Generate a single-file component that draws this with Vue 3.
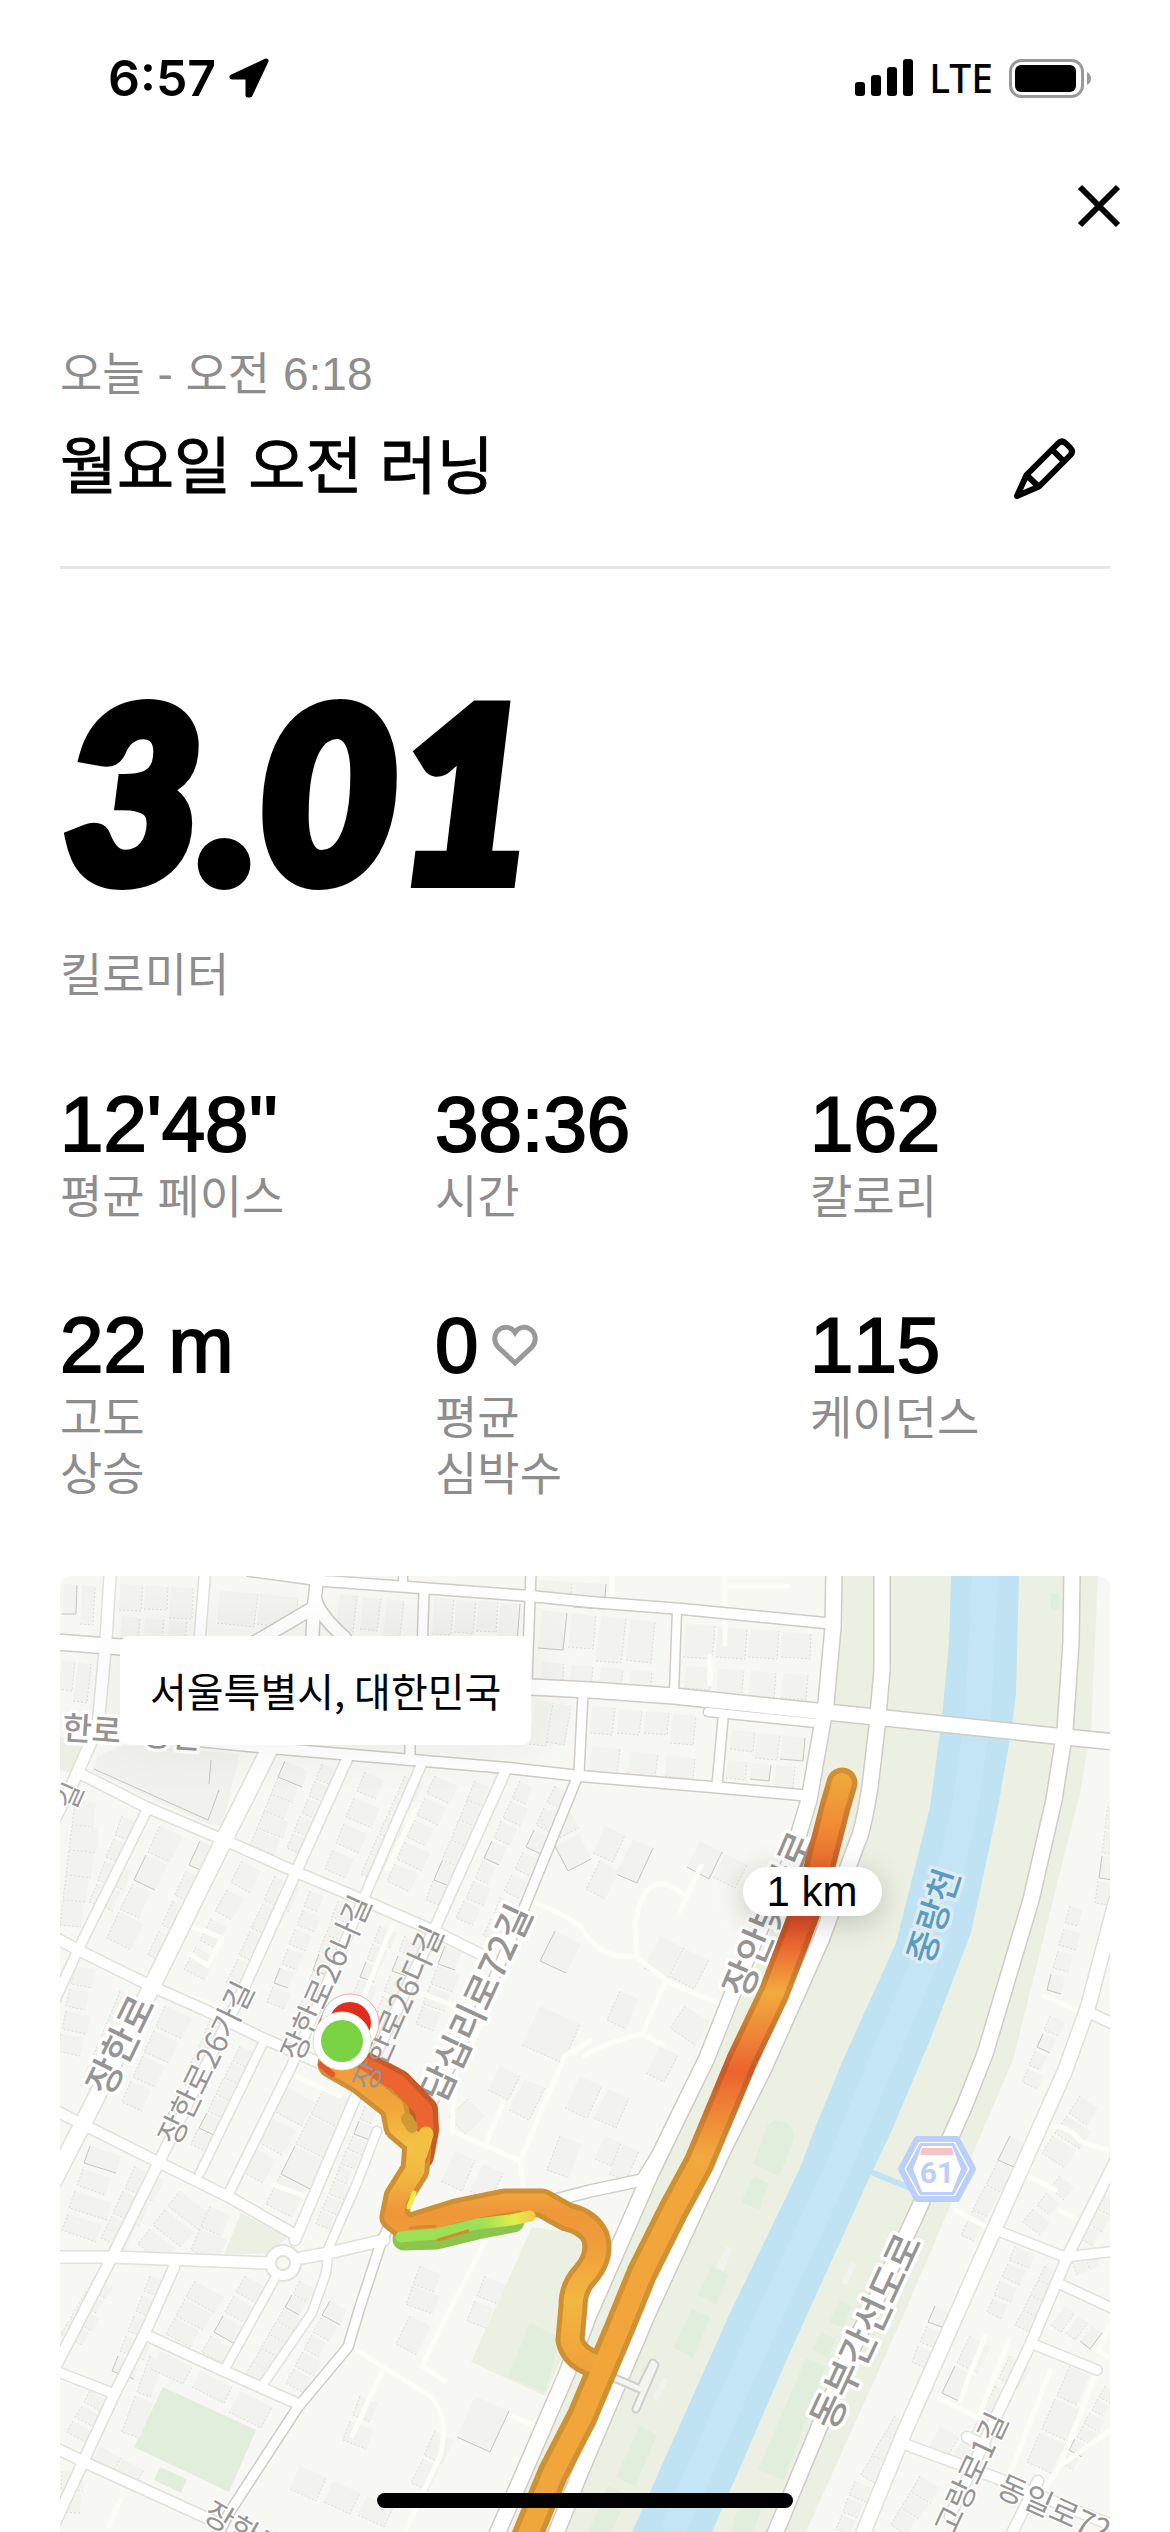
<script setup>
// -- Dependencies --
import {ref} from "vue";

// -- References --
const title = ref('월요일 오전 러닝');
const stats = ref([
  {value: "12'48''", label: ['평균 페이스']},
  {value: '38:36', label: ['시간']},
  {value: '162', label: ['칼로리']},
  {value: '22 m', label: ['고도', '상승']},
  {value: '0', label: ['평균', '심박수'], heart: true},
  {value: '115', label: ['케이던스']},
]);

// -- Map data --
// Small streets, light casing
const streets = [
  {w: 11, d: 'M50 0L46 64L38 150L11 211L-4 240'},
  {w: 10, d: 'M145 -4L140 60L137 164'},
  {w: 10, d: 'M19 197L86 231L164 264L236 296L303 324L372 354L426 381'},
  {w: 10, d: 'M-4 362L18 374L93 411L145 434L200 461L262 488'},
  {w: 9, d: 'M88 232L18 374L-4 422'},
  {w: 16, d: 'M210 172L164 264L90 414L35 524L-6 604'},
  {w: 10, d: 'M288 181L236 296L183 414L100 584L52 681L-4 790'},
  {w: 9, d: 'M362 187L303 324L231 491L169 617'},
  {w: 10, d: 'M445 196L374 354L293 527L235 664'},
  {w: 8, d: 'M204 465L140 597'},
  {w: 8, d: 'M317 555L297 607L269 671L266 697L252 737L204 807'},
  {w: 10, d: 'M-4 535L100 587L169 621L234 658'},
  {w: 11, d: 'M-4 681L52 681L210 687M241 682L269 677L324 664'},
  {w: 10, d: 'M114 691L85 757L55 817L23 886L-4 945'},
  {w: 9, d: 'M-4 795L52 817'},
  {w: 10, d: 'M86 759L162 794L236 827'},
  {w: 8, d: 'M214 704L166 791'},
  {w: 10, d: 'M-4 872L24 886L160 948'},
  {w: 14, d: 'M1056 325L1028 431L1005 495L934 654L844 857L800 965'},
  {w: 10, d: 'M1032 438L1056 449'},
  {w: 10, d: 'M1056 583L1009 677L971 767L919 877L890 940'},
  {w: 10, d: 'M978 905L948 965'},
  {w: 9, d: 'M941 656L1005 681L1056 675'},
  {w: 9, d: 'M1000 708L1056 734'},
  {w: 9, d: 'M973 768L1037 794'},
  {w: 10, d: 'M847 869L934 901L1056 951'},
  {w: 10, d: 'M907 861L925 870'},
];

// Named roads, stronger casing
const roads = [
  {w: 15, d: 'M-4 66L61 71L471 111L530 114L614 120L708 130L825 142L1005 161L1056 166'},
  {w: 10, d: 'M190 -5L265 5L470 20L530 26L622 33L765 47'},
  {w: 12, d: 'M257 3L254 30L252 70M253 32L195 66M255 22Q258 38 285 62'},
  {w: 9, d: 'M364 14L361 110'},
  {w: 9, d: 'M471 -4L467 106'},
  {w: 8, d: 'M343 -4L343 8'},
  {w: 10, d: 'M128 164L210 172L352 184L448 192L520 200L652 211L751 220'},
  {w: 9, d: 'M350 110L350 184'},
  {w: 9, d: 'M523 117L519 197L462 337L426 421L372 527L345 620L322 664L300 731L288 771L238 831L169 937L155 965'},
  {w: 8, d: 'M617 34L614 118'},
  {w: 8, d: 'M648 136L765 148'},
  {w: 9, d: 'M663 143L657 209'},
  {w: 11, d: 'M480 628L530 615L582 604L600 575'},
  {w: 15, d: 'M774 -4L773 51L766 127L749 224L731 284L686 384L646 484L620 537L591 597L528 741L507 797L434 965'},
  {w: 15, d: 'M822 -4L822 94L817 151L810 211Q803 255 797 267L761 364L704 492L663 574L588 737L520 897L493 965'},
  {w: 15, d: 'M1012 -4L1011 67L1005 154L994 224L971 324L925 478L904 531L855 641L787 784L712 965'},
];

const paths = [
  'M552 0V24M665 10H728M665 0V68M650 80V108',
  'M641 290L620 335M625 320Q585 285 575 350L577 380Q540 385 520 350M577 382L610 407L660 428M605 407L582 458L605 470M582 458Q540 468 524 480',
  'M355 235L327 293M332 350L300 430M355 415L395 430M470 325Q500 335 520 350',
  'M130 420L158 432M132 350L162 362L148 390L130 378',
  'M445 400L395 500L392 555L460 585L505 480L530 465M443 527L425 570M460 585L465 620',
  'M425 665L362 790L385 805M290 770L370 820Q390 840 380 880L345 956M325 790L292 860',
  'M453 840L475 850M60 925L48 950M214 609L245 620M235 500L280 520',
  'M897 635L925 650M990 550Q1010 550 1020 565L1050 575M968 600L995 614M1000 635L1020 645M985 420L1018 435',
  'M925 760L900 825M948 765L920 838M880 823L925 845M990 795L945 910M1035 800L1000 890L980 920M1050 750L1038 775L1056 785M1056 850L1000 890',
];

const parks = [
  'M103 811L196 854L169 916L74 871z',
  'M100 891L127 903L121 917L94 904z',
  'M470 747L500 761L485 816L448 801z',
  'M707 550Q715 540 728 548Q738 555 733 567L719 600L693 588z',
  'M694 600L709 608L699 634L681 626z',
  'M652 690L669 698L656 729L638 719z',
  'M632 733L650 741L633 782L613 771z',
  'M580 850L597 859L575 910L556 901z',
  'M548 910L568 918L548 965H525z',
  'M780 724L792 730L783 752L769 746z',
  'M762 756L776 763L768 782L752 774z',
  'M746 782L766 790L724 904L698 894z',
  'M682 918L705 924L690 965H668z',
  'M991 17h8v17h-8z',
];

// Rows of houses: start, end, count, depth
const rows = [
  [4, 8, 40, 10, 2, 40], [60, 8, 136, 12, 3, 32], [62, 40, 132, 46, 3, 28], [160, 14, 240, 22, 2, 34],
  [2, 84, 34, 88, 2, 40], [280, 18, 350, 26, 3, 44], [374, 22, 462, 28, 4, 40], [374, 62, 458, 70, 3, 34],
  [480, 4, 548, 8, 2, 26], [482, 34, 600, 46, 4, 46], [482, 86, 600, 96, 4, 30], [626, 48, 755, 58, 4, 34],
  [626, 90, 755, 100, 4, 30], [476, 124, 512, 130, 2, 54], [532, 130, 640, 140, 4, 30], [532, 170, 645, 184, 3, 26],
  [672, 154, 748, 162, 3, 26], [668, 184, 740, 192, 3, 22],
  [225, 185, 190, 270, 5, 28], [262, 188, 226, 275, 5, 20], [305, 196, 262, 300, 4, 28], [345, 200, 300, 300, 5, 24],
  [375, 200, 325, 310, 5, 28], [415, 205, 365, 325, 6, 22], [460, 205, 395, 345, 7, 20], [495, 210, 420, 365, 7, 22],
  [100, 250, 45, 365, 4, 28], [140, 265, 85, 385, 4, 30], [15, 225, 0, 350, 5, 28], [62, 240, 28, 330, 4, 28],
  [182, 285, 120, 400, 4, 24], [215, 300, 165, 410, 4, 28], [250, 315, 205, 430, 6, 20], [278, 325, 240, 430, 6, 20],
  [320, 350, 285, 440, 5, 20], [345, 360, 315, 440, 4, 20], [385, 370, 355, 450, 4, 24],
  [15, 390, -4, 480, 4, 26], [60, 415, 20, 510, 4, 26], [105, 430, 60, 530, 4, 30], [150, 445, 105, 545, 6, 20],
  [180, 470, 130, 570, 6, 20], [225, 510, 175, 600, 3, 38], [265, 510, 205, 630, 4, 40], [305, 530, 255, 650, 8, 18],
  [30, 570, 0, 660, 4, 40], [75, 590, 40, 665, 3, 36], [120, 615, 75, 672, 3, 40], [150, 630, 130, 675, 2, 30],
  [35, 700, 0, 760, 4, 26], [90, 700, 50, 800, 5, 26], [135, 705, 105, 760, 3, 34], [185, 700, 140, 780, 4, 34],
  [240, 705, 185, 800, 7, 22], [270, 725, 225, 810, 5, 22], [30, 815, 5, 860, 3, 28], [90, 780, 60, 860, 2, 20],
  [100, 775, 220, 835, 3, 24], [40, 870, 85, 895, 2, 28], [2, 895, 0, 940, 2, 22],
  [1010, 330, 985, 420, 4, 18], [1048, 230, 1035, 330, 4, 22], [990, 440, 960, 510, 4, 18], [950, 560, 900, 660, 4, 20],
  [1020, 520, 980, 580, 3, 30], [1000, 600, 960, 650, 3, 22], [1045, 620, 1020, 665, 3, 18], [955, 670, 925, 740, 4, 22],
  [985, 690, 955, 750, 4, 22], [1040, 690, 1015, 700, 2, 20], [1005, 730, 1045, 760, 3, 26], [910, 760, 880, 820, 2, 24],
  [875, 730, 850, 790, 3, 20], [835, 840, 800, 900, 3, 20], [795, 905, 775, 956, 3, 20], [950, 780, 905, 870, 3, 24],
  [1010, 790, 965, 890, 3, 30], [1045, 810, 1000, 890, 6, 18], [860, 900, 830, 950, 3, 26], [880, 850, 925, 875, 2, 24],
  [545, 250, 600, 275, 2, 40], [640, 265, 690, 290, 2, 36], [540, 285, 522, 320, 1, 24], [600, 360, 650, 385, 2, 36],
  [560, 415, 545, 450, 1, 28], [625, 430, 605, 460, 1, 36], [600, 470, 620, 480, 1, 34], [520, 500, 575, 525, 2, 36],
  [545, 560, 580, 575, 2, 34], [480, 240, 510, 300, 2, 36], [495, 355, 475, 395, 1, 32], [480, 430, 525, 450, 1, 44],
  [440, 490, 490, 515, 2, 36], [425, 540, 405, 560, 1, 30], [500, 560, 485, 600, 1, 26], [395, 575, 450, 600, 2, 34],
  [360, 690, 345, 730, 2, 30], [425, 700, 405, 750, 2, 28], [350, 740, 335, 770, 1, 26], [415, 820, 455, 838, 1, 46],
  [300, 820, 280, 870, 2, 26], [375, 855, 350, 910, 2, 26], [240, 890, 340, 935, 3, 28],
];

const labels = [
  {text: '한로', x: 32, y: 151, angle: 4, size: 32, weight: 500},
  {text: '장안', x: 112, y: 157, angle: 4, size: 32, weight: 500},
  {text: '길', x: 8, y: 219, angle: -66, size: 28},
  {text: '장한로', x: 58, y: 468, angle: -64, size: 38, weight: 500},
  {text: '장한로26가길', x: 144, y: 486, angle: -64, size: 31},
  {text: '장한로26나길', x: 264, y: 401, angle: -66, size: 31},
  {text: '답십리로72길', x: 414, y: 426, angle: -65, size: 37, weight: 500},
  {text: '장안벚꽃로', x: 706, y: 337, angle: -67, size: 38, weight: 500},
  {text: '중랑천', x: 871, y: 339, angle: -72, size: 35, weight: 500, river: true},
  {text: '동부간선도로', x: 803, y: 754, angle: -65, size: 38, weight: 500},
  {text: '고랑로1길', x: 909, y: 897, angle: -65, size: 31},
  {text: '동일로72길', x: 1008, y: 936, angle: 24, size: 31},
  {text: '장한로', x: 185, y: 953, angle: 30, size: 31},
];

// GPS track
const mainTrack = 'M782 207L775 231L764 274Q756 306 743 341L714 417L682 484L675 501L639 587L613 635L582 697L560 751L546 784L522 841L493 897L465 965';
const sideTrack = 'M272 488L300 504L334 531L338 551L357 567L355 594L338 621L334 641L348 652L396 637L445 627L482 627L507 641Q527 645 535 660Q542 680 524 700Q513 712 513 730L510 764Q514 784 543 790';
const redTrack = 'M306 490L338 507L364 534L365 554L360 580';
const greenTrack = 'M341 661L376 658L417 648L451 644L470 640';

// -- Functions --
// Cuts a row into houses of uneven length, returned as svg paths
function getHouses([x1, y1, x2, y2, count, depth], rowIndex){
  const length = Math.hypot(x2 - x1, y2 - y1);
  const ux = (x2 - x1) / length;
  const uy = (y2 - y1) / length;
  const step = length / count;
  const side = uy > Math.abs(ux) ? -1 : 1;
  const houses = [];

  for (let i = 0; i < count; i++) {
    const long = step * (0.74 + ((i * 5 + rowIndex * 3) % 5) * 0.05);
    const deep = depth * (0.74 + ((i * 3 + rowIndex) % 4) * 0.08);
    const ax = x1 + ux * step * i;
    const ay = y1 + uy * step * i;
    const bx = ax + ux * long;
    const by = ay + uy * long;
    const nx = -uy * deep * side;
    const ny = ux * deep * side;
    const points = [[ax, ay], [bx, by], [bx + nx, by + ny], [ax + nx, ay + ny]].map(p => p.map(Math.round).join(' '));
    houses.push({
      d: `M${points.join('L')}z`,
      shade: `M${points[side > 0 ? 3 : 0]}L${points[side > 0 ? 2 : 1]}L${points[side > 0 ? 1 : 2]}`,
      solid: (i + rowIndex) % 9 === 0,
    });
  }

  return houses;
}

const houses = rows.flatMap(getHouses);
</script>

<template>
  <main>
    <header class="status">
      <div class="clock">
        <span>6:57</span>
        <svg width="40" height="40" viewBox="0 0 40 40" aria-hidden="true">
          <path d="M37 3L3 19H19V37H21z" stroke="#000" stroke-width="5" stroke-linejoin="round"/>
        </svg>
      </div>
      <div class="signals">
        <svg width="58" height="38" viewBox="0 0 58 38" aria-hidden="true">
          <rect x="0" y="23" width="10" height="14" rx="3"/>
          <rect x="16" y="16" width="10" height="21" rx="3"/>
          <rect x="32" y="8" width="10" height="29" rx="3"/>
          <rect x="48" y="0" width="10" height="37" rx="3"/>
        </svg>
        <span>LTE</span>
        <svg width="83" height="39" viewBox="0 0 83 39" aria-hidden="true">
          <rect x="1.5" y="1.5" width="72" height="36" rx="11" fill="none" stroke="#999" stroke-width="3"/>
          <rect x="6" y="6" width="61" height="27" rx="6"/>
          <path d="M78 13q4 2 4 6.500t-4 6.500z" fill="#999"/>
        </svg>
      </div>
    </header>

    <nav>
      <button type="button" aria-label="닫기">
        <svg width="44" height="44" viewBox="0 0 44 44">
          <path d="M3 3L41 41M41 3L3 41" stroke="#000" stroke-width="6"/>
        </svg>
      </button>
    </nav>

    <section class="heading">
      <p class="grey">오늘 - 오전 6:18</p>
      <div class="titleRow">
        <h1>{{ title }}</h1>
        <button type="button" aria-label="제목 편집">
          <svg width="62" height="62" viewBox="0 0 62 62" fill="none" stroke="#000" stroke-width="6" stroke-linejoin="round">
            <path d="M3 59L12.500 38L44 6.500Q48 2.500 52 6.500L56 10.500Q60 14.500 56 18.500L25 49.500zM38 12.500L50 24.500M12.500 38L25 50"/>
          </svg>
        </button>
      </div>
    </section>

    <section class="distance">
      <strong>3.01</strong>
      <p class="grey">킬로미터</p>
    </section>

    <dl>
      <div v-for="stat in stats" :key="stat.value">
        <dd>
          {{ stat.value }}
          <svg v-if="stat.heart" width="46" height="42" viewBox="0 0 46 42" fill="none" stroke="#999" stroke-width="5" aria-hidden="true">
            <path d="M23 8.500C19 2 12 2.500 8 5C2 9 1 17 6 23L23 39L40 23C45 17 44 9 38 5C34 2.500 27 2 23 8.500z"/>
          </svg>
        </dd>
        <dt class="grey">
          <span v-for="line in stat.label" :key="line">{{ line }}</span>
        </dt>
      </div>
    </dl>

    <section class="map">
      <svg class="tiles" viewBox="0 0 1050 956" role="img" aria-label="러닝 경로">
        <defs>
          <linearGradient id="trackFill" gradientUnits="userSpaceOnUse" x1="0" y1="200" x2="0" y2="600">
            <stop offset="0" stop-color="#f0a83c"/>
            <stop offset="0.13" stop-color="#ef8a36"/>
            <stop offset="0.25" stop-color="#e8632d"/>
            <stop offset="0.35" stop-color="#df4d28"/>
            <stop offset="0.42" stop-color="#ea6530"/>
            <stop offset="0.54" stop-color="#f3aa3f"/>
            <stop offset="0.64" stop-color="#ef8836"/>
            <stop offset="0.74" stop-color="#ec632f"/>
            <stop offset="0.84" stop-color="#ef8535"/>
            <stop offset="0.95" stop-color="#f2a93d"/>
            <stop offset="1" stop-color="#f1a53b"/>
          </linearGradient>
          <linearGradient id="trackEdge" gradientUnits="userSpaceOnUse" x1="0" y1="200" x2="0" y2="600">
            <stop offset="0" stop-color="#cf9133"/>
            <stop offset="0.25" stop-color="#c85a28"/>
            <stop offset="0.4" stop-color="#c65428"/>
            <stop offset="0.54" stop-color="#cf9033"/>
            <stop offset="0.74" stop-color="#c65a28"/>
            <stop offset="0.9" stop-color="#cd8a31"/>
            <stop offset="1" stop-color="#cf9233"/>
          </linearGradient>
          <linearGradient id="sideFill" gradientUnits="userSpaceOnUse" x1="0" y1="490" x2="0" y2="790">
            <stop offset="0" stop-color="#f09a38"/>
            <stop offset="0.15" stop-color="#f1a83c"/>
            <stop offset="0.27" stop-color="#f4c445"/>
            <stop offset="0.38" stop-color="#f2b440"/>
            <stop offset="0.48" stop-color="#ee9738"/>
            <stop offset="0.58" stop-color="#f09b39"/>
            <stop offset="0.78" stop-color="#f3b740"/>
            <stop offset="1" stop-color="#f0a23a"/>
          </linearGradient>
          <linearGradient id="greenFill" gradientUnits="userSpaceOnUse" x1="341" y1="0" x2="475" y2="0">
            <stop offset="0.6" stop-color="#9be055"/>
            <stop offset="0.85" stop-color="#e3ee4b"/>
            <stop offset="1" stop-color="#f3c945"/>
          </linearGradient>
        </defs>

        <rect width="1050" height="956" fill="#f7f8f3"/>

        <!-- Green areas and river -->
        <g fill="#ecf0e2">
          <path d="M782 0L780 67L772 144L757 231L708 361L655 484L614 560L576 651L528 757L486 860L450 956H746L840 747L900 607L953 484L1020 217L1031 152L1038 0z"/>
          <path d="M472 651L513 657L530 677V717L485 820L411 786z"/>
          <path d="M181 637L228 661L210 677L164 679z"/>
          <path d="M0 161L27 166L11 197L0 194z"/>
        </g>
        <path d="M891 0L889 67L882 141L870 231L836 367L783 484L753 557L740 592L670 737L572 956H652L731 774L813 594L832 554L870 464L911 357L938 231L952 151L956 117L959 0z" fill="#c0e3f3"/>
        <path d="M925 0L918 140L905 231L875 362L820 490L778 592L700 760L612 956" fill="none" stroke="#c4e5f5" stroke-width="26"/>
        <path d="M811 596L855 614" stroke="#c0e3f3" stroke-width="6"/>
        <path v-for="d in parks" :key="d" :d="d" fill="#e1eedb"/>

        <!-- Buildings -->
        <path d="M38 180L66 168L180 178L162 250L148 248L32 195z" fill="#f1f2ee"/>
        <path d="M34 193L148 244L159 214M149 208L151 184" class="shade solid"/>
        <g v-for="(house, i) in houses" :key="i">
          <path :d="house.d" fill="#f2f3ef"/>
          <path :d="house.shade" :class="['shade', house.solid && 'solid']"/>
        </g>
        <g fill="#f2f3ef">
          <path d="M666 670L672 673L663 696L656 693zM792 686L796 688L787 709L781 706zM603 802L608 804L598 825L593 822z"/>
        </g>
        <path v-for="d in paths" :key="d" :d="d" class="path"/>

        <!-- Roads: every casing first, then every surface -->
        <path v-for="road in streets" :key="road.d" :d="road.d" class="line" stroke="#e2e0da" :stroke-width="road.w + 3"/>
        <circle cx="223" cy="687" r="19" fill="#e2e0da"/>
        <path v-for="road in roads" :key="road.d" :d="road.d" class="line" stroke="#d0cbc5" :stroke-width="road.w + 3"/>
        <path v-for="road in streets" :key="road.d" :d="road.d" class="line" stroke="#fff" :stroke-width="road.w"/>
        <path v-for="road in roads" :key="road.d" :d="road.d" class="line" stroke="#fff" :stroke-width="road.w"/>
        <circle cx="223" cy="687" r="12" fill="#f7f8f3" stroke="#fff" stroke-width="10"/>
        <circle cx="223" cy="687" r="7" fill="#f7f8f3" stroke="#e2e0da" stroke-width="2"/>
        <path d="M552 801L580 813L593 787M576 833L595 789" class="line" stroke="#cfcfcb" stroke-width="9"/>
        <path d="M552 801L580 813L593 787M576 833L595 789" class="line" stroke="#f4f4f0" stroke-width="5"/>

        <!-- Route number -->
        <g stroke-linejoin="round">
          <path d="M857 563H897L913 593L897 623H857L841 593z" fill="#fff" stroke="#bccffb" stroke-width="6"/>
          <path d="M860 567H894L908 593L894 619H860L846 593z" fill="#bccffb"/>
          <path d="M862 570H892L901 593L892 616H862L853 593z" fill="#fff"/>
          <path d="M862 572H892L894 579H860z" fill="#f6c4c4"/>
        </g>
        <text class="routeNumber" x="877" y="607">61</text>

        <text v-for="label in labels" :key="label.text + label.x" :class="['street', label.river && 'river']"
              :transform="`translate(${label.x} ${label.y}) rotate(${label.angle})`"
              :font-size="label.size" :font-weight="label.weight || 400" :stroke-width="label.weight ? 7 : 3">{{ label.text }}</text>

        <!-- Track -->
        <g class="track">
          <path :d="redTrack" stroke="#c65a28" stroke-width="28"/>
          <path d="M344 663L376 662L417 652L453 645" stroke="#8cc54c" stroke-width="23"/>
          <path :d="sideTrack" stroke="#cf8f33" stroke-width="29"/>
          <path :d="mainTrack" stroke="url(#trackEdge)" stroke-width="31"/>
          <path :d="redTrack" stroke="#ec642f" stroke-width="17"/>
          <path :d="sideTrack" stroke="url(#sideFill)" stroke-width="19"/>
          <path :d="mainTrack" stroke="url(#trackFill)" stroke-width="20"/>
          <path d="M340 511L362 536L363 549" stroke="#ec642f" stroke-width="12"/>
          <path d="M366 558L360 578" stroke="#f2c043" stroke-width="15"/>
          <path d="M350 652L375 650M420 643L460 636" stroke="#d58a30" stroke-width="3"/>
          <path :d="greenTrack" stroke="url(#greenFill)" stroke-width="11"/>
          <path d="M378 664L408 655" stroke="#d58a30" stroke-width="3"/>
          <path d="M354 617L349 631" stroke="#ecec4a" stroke-width="5"/>
          <path d="M347 543L352 551" stroke="#cf9a33" stroke-width="12"/>
          <path d="M261 489L272 498" stroke="#e8542b" stroke-width="6"/>
        </g>
        <text class="street" transform="translate(336 431) rotate(-66)" font-size="31" stroke-width="0">장한로26다길</text>

        <circle cx="290" cy="447" r="29" fill="#fff" stroke="#f0a8a4"/>
        <circle cx="290" cy="447" r="21" fill="#e02d20"/>
        <circle cx="282" cy="465" r="29" fill="#fff" stroke="#d3efc2"/>
        <circle cx="282" cy="465" r="21" fill="#79d343"/>
      </svg>
      <p class="place">서울특별시, 대한민국</p>
      <span class="split">1 km</span>
    </section>

    <div class="homeBar"></div>
  </main>
</template>

<style>
body {
  margin: 0;
  background: #fff;
}
</style>

<style scoped>
main {
  font-family: "Liberation Sans", "Noto Sans CJK KR", sans-serif;
  color: #000;
  overflow: hidden;
}

h1, p, dl, dd {
  margin: 0;
}

button {
  display: flex;
  padding: 0;
  border: 0;
  background: none;
  cursor: pointer;
}

.grey {
  color: #8d8d8d;
  font-size: 46px;
  line-height: 56px;
}

.status {
  display: flex;
  align-items: center;
  justify-content: space-between;
  height: 156px;
  padding: 0 78px 0 108px;
}

.clock, .signals {
  display: flex;
  align-items: center;
}

.clock {
  gap: 13px;
  font: 600 50px/60px Inter, sans-serif;
}

.signals {
  gap: 16px;
  font: 500 39px/50px "Noto Sans", sans-serif;
}

nav {
  display: flex;
  align-items: center;
  justify-content: flex-end;
  height: 100px;
  padding-right: 49px;
}

.heading {
  margin: 90px 60px 0;
  padding-bottom: 58px;
  border-bottom: 3px solid #e5e5e5;
}

.titleRow {
  display: flex;
  align-items: center;
  justify-content: space-between;
  margin-top: 26px;
  padding-right: 34px;
}

h1 {
  font-size: 62px;
  line-height: 80px;
  font-weight: 400;
  -webkit-text-stroke: 1px #000;
}

.distance {
  margin: 120px 60px 0;
}

.distance strong {
  display: block;
  margin-bottom: 58px;
  padding-left: 4px;
  font: italic 900 238px/200px Lato, sans-serif;
  -webkit-text-stroke: 14px #000;
}

dl {
  display: grid;
  grid-template-columns: 5fr 5fr 4fr;
  row-gap: 77px;
  margin: 78px 60px 74px;
}

dl > div {
  display: flex;
  flex-direction: column;
  gap: 2px;
}

dd {
  display: flex;
  align-items: center;
  gap: 14px;
  font-size: 78px;
  line-height: 86px;
  font-kerning: none;
  -webkit-text-stroke: 2px #000;
}

dt span {
  display: block;
}

.map {
  position: relative;
  margin: 0 60px;
  border-radius: 12px 12px 0 0;
  overflow: hidden;
}

.tiles {
  display: block;
  width: 100%;
}

.line, .path {
  fill: none;
  stroke-linejoin: round;
  stroke-linecap: round;
}

.path {
  stroke: #fdfdf8;
  stroke-width: 5px;
}

.shade {
  fill: none;
  stroke: #dbdcd8;
  stroke-width: 1px;
  stroke-dasharray: 2 2;
}

.solid {
  stroke: #c4c5c1;
  stroke-dasharray: none;
}

.street {
  font-family: "Noto Sans CJK KR", sans-serif;
  fill: #979593;
  stroke: #fff;
  stroke-linejoin: round;
  paint-order: stroke;
  text-anchor: middle;
  dominant-baseline: central;
}

.river {
  fill: #5a9bc0;
  stroke: #dcecf2;
}

.routeNumber {
  font: bold 30px Roboto, sans-serif;
  fill: #bccffb;
  text-anchor: middle;
}

.track path {
  fill: none;
  stroke-linejoin: round;
  stroke-linecap: round;
}

.place {
  position: absolute;
  top: 60px;
  left: 60px;
  padding: 25px 30px 26px;
  border-radius: 9px;
  background: #fff;
  box-shadow: 0 0 60px rgba(0, 0, 0, 0.06);
  font: 400 40px/58px "Noto Sans CJK KR", sans-serif;
}

.split {
  position: absolute;
  top: 30.4%;
  left: 65%;
  padding: 0 24px;
  border-radius: 25px;
  background: #fff;
  box-shadow: 0 6px 30px rgba(0, 0, 0, 0.2);
  font-size: 42px;
  line-height: 49px;
}

.homeBar {
  position: fixed;
  bottom: 24px;
  left: 50%;
  width: 416px;
  height: 15px;
  margin-left: -208px;
  border-radius: 8px;
  background: #000;
}
</style>
